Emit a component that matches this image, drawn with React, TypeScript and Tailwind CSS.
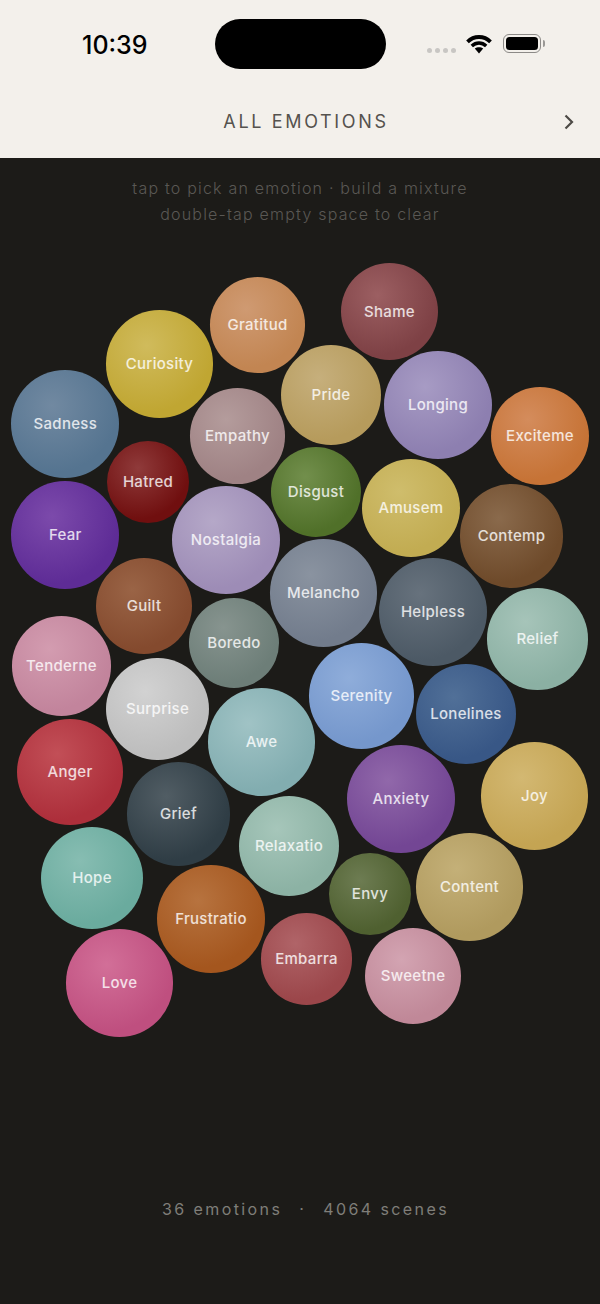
import React from "react";

type B = [string, number, number, number, string, string];
// name, cx, cy, diameter, highlight colour, base colour
const bubbles: B[] = [
  ["Shame", 389.5, 311.5, 97, "#9c5f62", "#7e4145"],
  ["Gratitud", 257.5, 325, 96, "#cf9a72", "#c28552"],
  ["Curiosity", 159.5, 364, 108, "#d0bb5c", "#c0a632"],
  ["Sadness", 65.3, 424, 108, "#7189a1", "#557490"],
  ["Pride", 331, 395, 100, "#c6af7c", "#b69b5c"],
  ["Longing", 438, 405, 108, "#a79bc4", "#8d7fb0"],
  ["Exciteme", 540, 436, 98, "#d48c5c", "#c67336"],
  ["Empathy", 237.5, 436, 96, "#b49c9c", "#9f8284"],
  ["Hatred", 148, 482, 82, "#8f3a3a", "#700f0f"],
  ["Disgust", 316, 492, 90, "#728f4c", "#507029"],
  ["Amusem", 411, 508, 98, "#cfbd6c", "#c2ac52"],
  ["Contemp", 511.5, 536, 104, "#8a6a4c", "#6e4a2a"],
  ["Fear", 65.3, 535, 108, "#7c4aab", "#5e2c96"],
  ["Nostalgia", 226, 540, 108, "#b5a8c8", "#9d8cb6"],
  ["Melancho", 323.5, 593, 108, "#8a93a0", "#727c8c"],
  ["Helpless", 433, 612, 108, "#67727d", "#4c5965"],
  ["Relief", 537.5, 639, 102, "#a6c4b9", "#8bb0a3"],
  ["Guilt", 144, 606, 96, "#9a6446", "#844a2e"],
  ["Boredo", 234, 643, 90, "#87948f", "#6d7e78"],
  ["Tenderne", 61.5, 666, 100, "#d39cb0", "#c2849c"],
  ["Surprise", 157.5, 709, 103, "#d2d2d2", "#bdbdbd"],
  ["Awe", 261.5, 742, 108, "#a0c3c5", "#82adb0"],
  ["Serenity", 361.5, 696, 106, "#8fadda", "#7597cc"],
  ["Lonelines", 466, 714, 100, "#517098", "#385786"],
  ["Anger", 70, 772, 106, "#c24f57", "#ad2f3b"],
  ["Grief", 178.5, 814, 104, "#515d64", "#2f3d45"],
  ["Anxiety", 401, 799, 108, "#9168aa", "#734694"],
  ["Joy", 534.5, 796, 108, "#d3b872", "#c4a453"],
  ["Relaxatio", 289, 846, 100, "#a6c6ba", "#8cb2a4"],
  ["Hope", 92, 878, 103, "#87bdb2", "#6aab9e"],
  ["Envy", 370, 894, 83, "#6d7c52", "#4f6030"],
  ["Content", 469.5, 887, 108, "#c4b078", "#b09a5e"],
  ["Frustratio", 211, 919, 108, "#b7733f", "#a4561e"],
  ["Embarra", 306.5, 959, 92, "#b06468", "#9b464a"],
  ["Sweetne", 413, 976, 96, "#d3a4b2", "#c08898"],
  ["Love", 119.5, 983, 108, "#d26f98", "#bf4f7f"],
];

const font = "[font-family:Inter,'Liberation_Sans',sans-serif]";

function Bubble({ b }: { b: B }) {
  const [name, cx, cy, d, hi, base] = b;
  const size = d - 0.2;
  return (
    <div
      className="absolute flex items-center justify-center overflow-hidden rounded-full pt-[1px] text-[15px] font-[450] tracking-[0.3px] text-white/80"
      style={{
        left: cx - size / 2,
        top: cy - size / 2 - 158,
        width: size,
        height: size,
        background: `radial-gradient(circle at 38% 33%, ${hi} 0%, ${base} 68%)`,
      }}
    >
      <span className="whitespace-nowrap">{name}</span>
    </div>
  );
}

export default function App() {
  return (
    <div className={`flex h-[1304px] w-[600px] flex-col overflow-hidden bg-[#1c1b18] ${font}`}>
      <header className="relative h-[158px] shrink-0 bg-[#f3f0eb]">
        <div className="flex h-[88px] items-start">
          <span className="ml-[82px] mt-[30px] w-[65px] text-[25px] leading-[30px] font-medium whitespace-nowrap text-black">10:39</span>
          <div className="ml-[68px] mt-[19px] h-[50px] w-[171px] rounded-[25px] bg-black" />
          <div className="ml-[41px] mt-[48px] flex gap-[3px]">
            {[0, 1, 2, 3].map((i) => (
              <span key={i} className="h-[5px] w-[5px] rounded-full bg-[#c8c6c3]" />
            ))}
          </div>
          <svg className="ml-[9px] mt-[33px]" width="28" height="22" viewBox="0 0 28 22" fill="none">
            <path d="M2.5 8.8C9 2.4 19 2.4 25.5 8.8" stroke="#000" strokeWidth="3.8" />
            <path d="M6.8 13C11 9 17 9 21.2 13" stroke="#000" strokeWidth="3.4" />
            <path d="M9.8 15.6L14 20.5L18.2 15.6C16 13.7 12 13.7 9.8 15.6Z" fill="#000" />
          </svg>
          <div className="ml-[10px] mt-[34px] flex items-center">
            <div className="h-[19px] w-[38px] rounded-[6px] border-[1.5px] border-[#8c8a87] p-[2px]">
              <div className="h-full w-full rounded-[3.5px] bg-black" />
            </div>
            <div className="ml-[2px] h-[7px] w-[2px] rounded-r-sm bg-[#9a9895]" />
          </div>
        </div>
        <div className="relative flex h-[70px] items-start justify-center pl-[12px]">
          <span className="mt-[22px] text-[18px] leading-[24px] tracking-[2.65px] text-[#55524e]">ALL EMOTIONS</span>
          <svg className="absolute left-[561px] top-[24px]" width="16" height="20" viewBox="0 0 16 20" fill="none">
            <path d="M4.5 3.5L11 10L4.5 16.5" stroke="#4d4a46" strokeWidth="2.2" />
          </svg>
        </div>
      </header>
      <main className="relative flex flex-1 flex-col items-center">
        <div className="mt-[17px] text-center text-[16px] leading-[26px] font-light tracking-[1.2px] text-[#5a5854]">
          <p>tap to pick an emotion · build a mixture</p>
          <p>double-tap empty space to clear</p>
        </div>
        {bubbles.map((b) => (
          <Bubble key={b[0]} b={b} />
        ))}
        <div className="absolute left-0 right-0 top-[1040px] flex justify-center gap-[17px] pl-[11px] text-[16px] leading-[22px] tracking-[2.4px] whitespace-nowrap text-[#7f7e79]">
          <span>36 emotions</span>
          <span>·</span>
          <span>4064 scenes</span>
        </div>
      </main>
    </div>
  );
}
